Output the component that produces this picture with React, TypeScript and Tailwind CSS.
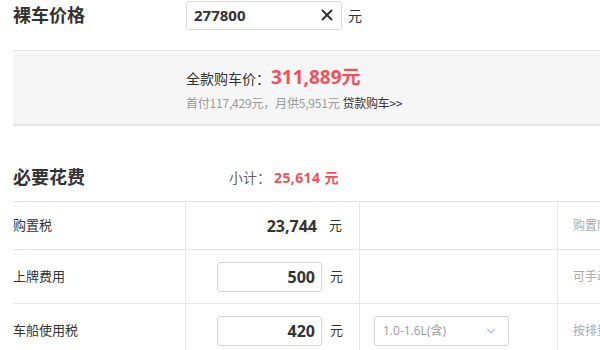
import { ChevronDown, X } from 'lucide-react';

const font = { fontFamily: '"Open Sans", "Noto Sans CJK SC", sans-serif' };
const cjk = { fontFamily: '"Noto Sans CJK SC", "Noto Sans", sans-serif' };

function NumInput({ value }: { value: string }) {
  return (
    <div className="flex h-[30px] w-[105px] items-center justify-end rounded-[3px] border border-[#d4d4d4] bg-white pr-[6px] text-[16px] font-bold text-[#333]">
      {value}
    </div>
  );
}

export default function App() {
  return (
    <div className="h-[350px] w-[600px] overflow-hidden bg-white text-[#333]" style={font}>
      <div className="w-[720px]">
        {/* 裸车价格 */}
        <div className="flex h-[30px] items-center pl-[13px]">
          <div className="w-[173px] text-[18px] font-bold leading-none text-[#333]">裸车价格</div>
          <div className="flex h-[29px] w-[156px] items-center justify-between rounded-[3px] border border-[#d9d9d9] pl-[7px] pr-[5px]">
            <span className="text-[15px] font-bold text-[#333]">277800</span>
            <X size={18} strokeWidth={2.6} className="text-[#333]" />
          </div>
          <span className="ml-[6px] text-[14px] text-[#333]">元</span>
        </div>

        {/* 全款购车价 */}
        <div className="ml-[13px] mt-[20px] h-[76px] border-t border-b-2 border-[#e3e3e3] bg-[#f6f6f6] pl-[173px] pt-[12px]">
          <div className="flex items-baseline">
            <span className="text-[14px] text-[#333]">全款购车价：</span>
            <span className="ml-[1px] text-[19px] font-bold text-[#f0505a]">311,889元</span>
          </div>
          <div className="mt-[2px] flex items-center text-[12px] text-[#999]" style={cjk}>
            <span className="tracking-[-0.2px]">首付117,429元，月供5,951元</span>
            <span className="ml-[3px] text-[#333] tracking-[-0.3px]">贷款购车&gt;&gt;</span>
          </div>
        </div>

        {/* 必要花费 */}
        <div className="mt-[34px] flex h-[34px] items-center pl-[13px]">
          <div className="w-[216px] text-[18px] font-bold leading-none">必要花费</div>
          <span className="text-[14px] text-[#666]">小计：</span>
          <span className="ml-[3px] text-[14px] font-bold tracking-[0.4px] text-[#f0505a]">25,614 元</span>
        </div>

        <div className="ml-[13px] mt-[7px] border-t border-[#e6e6e6]">
          <div className="flex h-[48px] border-b border-[#e6e6e6]">
            <div className="flex w-[172px] items-center text-[13px]">购置税</div>
            <div className="flex w-[174px] items-center justify-end border-l border-[#e6e6e6] pr-[17px]">
              <span className="text-[16px] font-bold">23,744</span>
              <span className="ml-[12px] text-[13px]">元</span>
            </div>
            <div className="w-[198px] border-l border-[#e6e6e6]" />
            <div className="flex flex-1 items-center border-l border-[#e6e6e6] pl-[15px] text-[12px] text-[#aaa]">购置附加税说明</div>
          </div>
          <div className="flex h-[54px] border-b border-[#e6e6e6]">
            <div className="flex w-[172px] items-center text-[13px]">上牌费用</div>
            <div className="flex w-[174px] items-center justify-end border-l border-[#e6e6e6] pr-[16px]">
              <NumInput value="500" />
              <span className="ml-[8px] text-[13px]">元</span>
            </div>
            <div className="w-[198px] border-l border-[#e6e6e6]" />
            <div className="flex flex-1 items-center border-l border-[#e6e6e6] pl-[15px] text-[12px] text-[#aaa]">可手动修改</div>
          </div>
          <div className="flex h-[54px]">
            <div className="flex w-[172px] items-center text-[13px]">车船使用税</div>
            <div className="flex w-[174px] items-center justify-end border-l border-[#e6e6e6] pr-[16px]">
              <NumInput value="420" />
              <span className="ml-[8px] text-[13px]">元</span>
            </div>
            <div className="flex w-[198px] items-center border-l border-[#e6e6e6] pl-[14px]">
              <div className="flex h-[30px] w-[135px] items-center justify-between rounded-[3px] border border-[#d4d4d4] pl-[8px] pr-[10px] text-[12px] text-[#999]">
                <span>1.0-1.6L(含)</span>
                <ChevronDown size={14} strokeWidth={1.8} className="text-[#8aa4d6]" />
              </div>
            </div>
            <div className="flex flex-1 items-center border-l border-[#e6e6e6] pl-[15px] text-[12px] text-[#aaa]">按排量收取</div>
          </div>
        </div>
      </div>
    </div>
  );
}
